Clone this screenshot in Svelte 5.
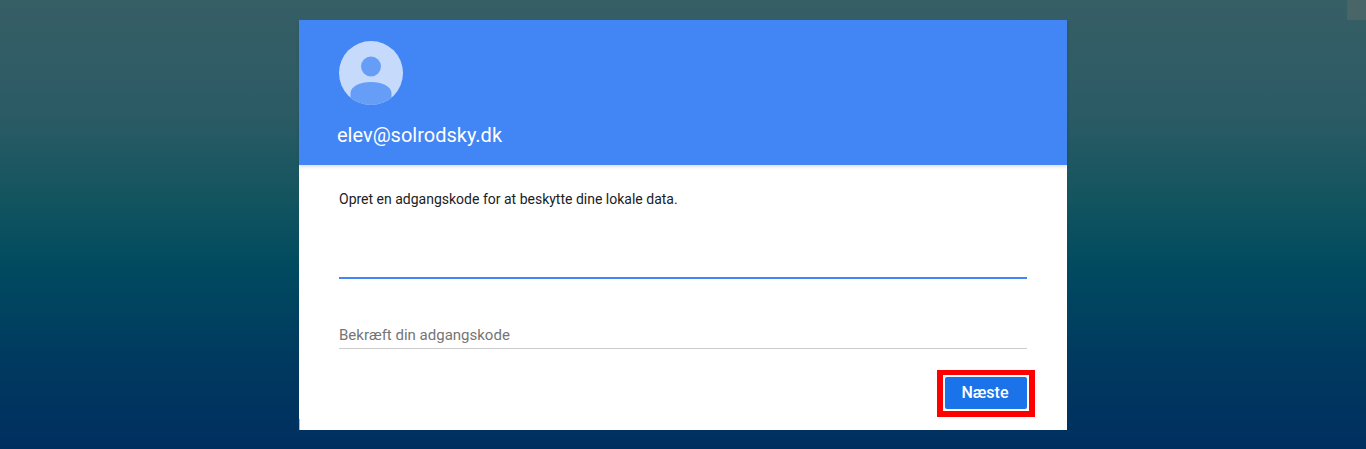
<script lang="ts">
    let password = $state('');
    let confirm = $state('');
</script>

<div class="screen">
    <div class="corner"></div>
    <div class="dialog">
        <header class="head">
            <svg class="avatar" width="64" height="64" viewBox="0 0 64 64">
                <defs>
                    <clipPath id="round"><circle cx="32" cy="32" r="32" /></clipPath>
                </defs>
                <circle cx="32" cy="32" r="32" fill="#c6dafc" />
                <circle cx="32" cy="25.500" r="10" fill="#669df6" />
                <path d="M11.500 64V52C11.500 45.500 21 41 32 41S52.500 45.500 52.500 52V64Z" fill="#669df6" clip-path="url(#round)" />
            </svg>
            <div class="email">elev@solrodsky.dk</div>
        </header>
        <div class="body">
            <p class="intro">Opret en adgangskode for at beskytte dine lokale data.</p>
            <input class="field active" type="password" bind:value={password} />
            <input class="field second" type="password" placeholder="Bekræft din adgangskode" bind:value={confirm} />
            <div class="actions">
                <div class="mark">
                    <button class="next">Næste</button>
                </div>
            </div>
        </div>
    </div>
</div>

<style>
    :global(body) {
        margin: 0;
    }

    .screen {
        position: relative;
        box-sizing: border-box;
        height: 449px;
        padding-top: 20px;
        overflow: hidden;
        background: linear-gradient(#365e65 0%, #2c5b65 25%, #12545f 45%, #004a5f 60%, #003a5f 80%, #002f5f 100%);
        font-family: Roboto, sans-serif;
    }

    .corner {
        position: absolute;
        top: 0;
        right: 0;
        width: 19px;
        height: 20px;
        background: #4a6568;
    }

    .dialog {
        position: relative;
        width: 768px;
        height: 410px;
        margin: 0 auto;
        background: #fff;
    }

    /* thin sliver at the lower left edge of the dialog */
    .dialog::after {
        content: '';
        position: absolute;
        left: 0;
        bottom: 0;
        width: 1px;
        height: 11px;
        background: #a9b9cc;
    }

    .head {
        box-sizing: border-box;
        height: 145px;
        padding: 21px 0 0 40px;
        background: #4285f4;
        box-shadow: 0 2px 3px rgba(0, 0, 0, 0.12);
    }

    .avatar {
        display: block;
    }

    .email {
        margin: 18px 0 0 -2px;
        font-size: 20px;
        line-height: 24px;
        color: #fff;
    }

    .body {
        padding: 26px 40px 0;
    }

    .intro {
        margin: 0;
        font-size: 14px;
        line-height: 16px;
        color: #202124;
    }

    .field {
        display: block;
        box-sizing: border-box;
        width: 100%;
        height: 32px;
        padding: 0;
        border: 0;
        border-bottom: 1px solid #ccc;
        outline: none;
        font-family: inherit;
        font-size: 15px;
        color: #202124;
    }

    .field::placeholder {
        color: #757575;
        opacity: 1;
    }

    .active {
        height: 33px;
        margin-top: 39px;
        border-bottom: 2px solid #4285f4;
    }

    .second {
        margin-top: 38px;
        padding-top: 4px;
    }

    .actions {
        display: flex;
        justify-content: flex-end;
        margin: 21px -8px 0 0;
    }

    .mark {
        padding: 2px;
        border: 6px solid #f00;
        border-top-width: 5px;
        background: #fff;
    }

    .next {
        display: block;
        box-sizing: border-box;
        width: 82px;
        height: 32px;
        padding: 0 2px 2px 0;
        border: 0;
        border-radius: 2px;
        background: #1a73e8;
        font-family: inherit;
        font-size: 16px;
        font-weight: 500;
        color: #fff;
    }
</style>
